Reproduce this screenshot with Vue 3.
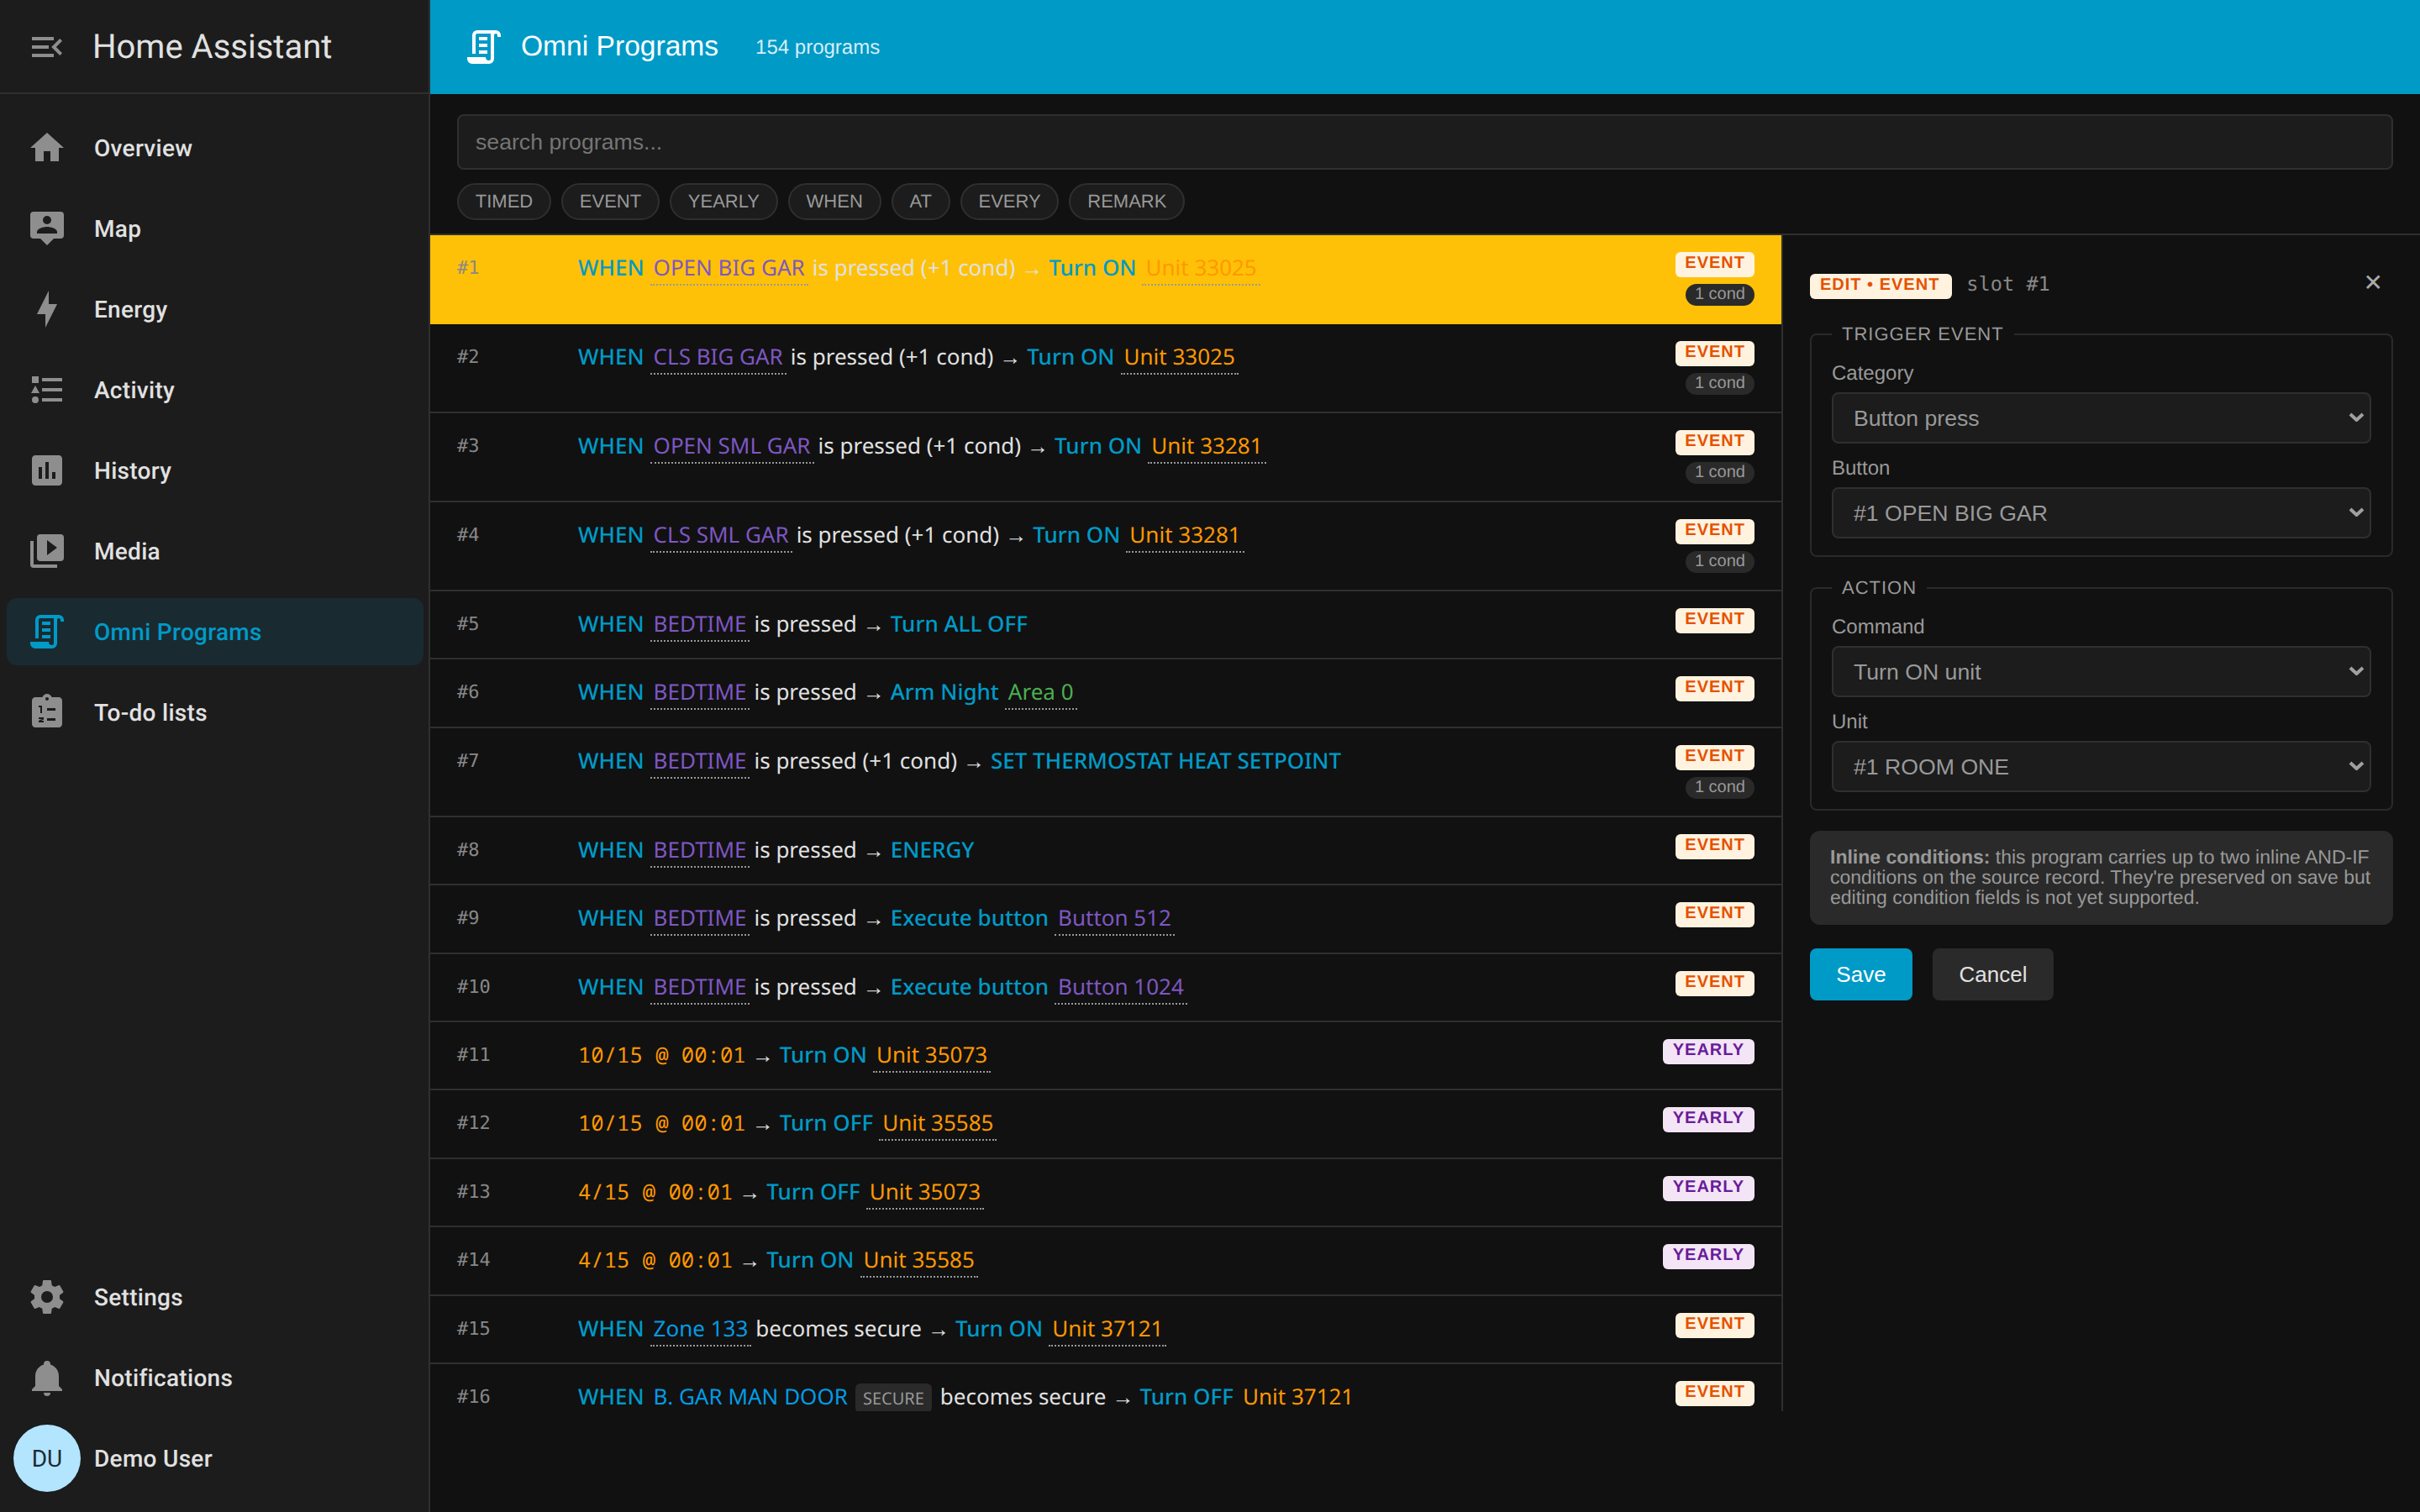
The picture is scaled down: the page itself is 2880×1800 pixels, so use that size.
<script setup>
const nav = [
  { label: 'Overview', d: 'M10,20V14H14V20H19V12H22L12,3L2,12H5V20H10Z' },
  { label: 'Map', d: 'M4 2H20A2 2 0 0 1 22 4V16A2 2 0 0 1 20 18H16L12 22L8 18H4A2 2 0 0 1 2 16V4A2 2 0 0 1 4 2M12 4.5A2.5 2.5 0 0 0 9.5 7A2.5 2.5 0 0 0 12 9.5A2.5 2.5 0 0 0 14.5 7A2.5 2.5 0 0 0 12 4.5M6 15H18V14C18 12 14 11 12 11S6 12 6 14V15Z' },
  { label: 'Energy', d: 'M11 15H6L13 1V9H18L11 23V15Z' },
  { label: 'Activity', d: 'M5,9.5L7.5,14H2.5L5,9.5M3,4H7V8H3V4M5,20A2,2 0 0,0 7,18A2,2 0 0,0 5,16A2,2 0 0,0 3,18A2,2 0 0,0 5,20M9,5V7H21V5H9M9,19H21V17H9V19M9,13H21V11H9V13Z' },
  { label: 'History', d: 'M9 17H7V10H9V17M13 17H11V7H13V17M17 17H15V13H17V17M19 3H5C3.9 3 3 3.9 3 5V19C3 20.1 3.9 21 5 21H19C20.1 21 21 20.1 21 19V5C21 3.9 20.1 3 19 3Z' },
  { label: 'Media', d: 'M4,6H2V20A2,2 0 0,0 4,22H18V20H4M20,2H8A2,2 0 0,0 6,4V16A2,2 0 0,0 8,18H20A2,2 0 0,0 22,16V4A2,2 0 0,0 20,2M12,14.5V5.5L18,10L12,14.5Z' },
  { label: 'Omni Programs', active: true, d: 'M15,20A1,1 0 0,0 16,19V4H8A1,1 0 0,0 7,5V16H5V5A3,3 0 0,1 8,2H19A3,3 0 0,1 22,5V6H20V5A1,1 0 0,0 19,4A1,1 0 0,0 18,5V9L18,19A3,3 0 0,1 15,22H5A3,3 0 0,1 2,19V18H13A2,2 0 0,0 15,20M9,6H14V8H9V6M9,10H14V12H9V10M9,14H14V16H9V14Z' },
  { label: 'To-do lists', d: 'M19 3H14.82C14.4 1.84 13.3 1 12 1S9.6 1.84 9.18 3H5C3.9 3 3 3.9 3 5V19C3 20.1 3.9 21 5 21H19C20.1 21 21 20.1 21 19V5C21 3.9 20.1 3 19 3M12 3C12.55 3 13 3.45 13 4S12.55 5 12 5 11 4.55 11 4 11.45 3 12 3M7 8H9V12.5H8V9H7ZM7 15H10V16.2L8.4 17H10V18H7V17L9 16H7ZM12 9.5H17V11H12ZM12 15.5H17V17H12Z' }
]
const bottomNav = [
  { label: 'Settings', d: 'M12,15.5A3.5,3.5 0 0,1 8.5,12A3.5,3.5 0 0,1 12,8.5A3.5,3.5 0 0,1 15.5,12A3.5,3.5 0 0,1 12,15.5M19.43,12.97C19.47,12.65 19.5,12.33 19.5,12C19.5,11.67 19.47,11.34 19.43,11L21.54,9.37C21.73,9.22 21.78,8.95 21.66,8.73L19.66,5.27C19.54,5.05 19.27,4.96 19.05,5.05L16.56,6.05C16.04,5.66 15.5,5.32 14.87,5.07L14.5,2.42C14.46,2.18 14.25,2 14,2H10C9.75,2 9.54,2.18 9.5,2.42L9.13,5.07C8.5,5.32 7.96,5.66 7.44,6.05L4.95,5.05C4.73,4.96 4.46,5.05 4.34,5.27L2.34,8.73C2.21,8.95 2.27,9.22 2.46,9.37L4.57,11C4.53,11.34 4.5,11.67 4.5,12C4.5,12.33 4.53,12.65 4.57,12.97L2.46,14.63C2.27,14.78 2.21,15.05 2.34,15.27L4.34,18.73C4.46,18.95 4.73,19.03 4.95,18.95L7.44,17.94C7.96,18.34 8.5,18.68 9.13,18.93L9.5,21.58C9.54,21.82 9.75,22 10,22H14C14.25,22 14.46,21.82 14.5,21.58L14.87,18.93C15.5,18.67 16.04,18.34 16.56,17.94L19.05,18.95C19.27,19.03 19.54,18.95 19.66,18.73L21.66,15.27C21.78,15.05 21.73,14.78 21.54,14.63L19.43,12.97Z' },
  { label: 'Notifications', d: 'M21,19V20H3V19L5,17V11C5,7.9 7.03,5.17 10,4.29C10,4.19 10,4.1 10,4A2,2 0 0,1 12,2A2,2 0 0,1 14,4C14,4.1 14,4.19 14,4.29C16.97,5.17 19,7.9 19,11V17L21,19M14,21A2,2 0 0,1 12,23A2,2 0 0,1 10,21' }
]
const scriptIcon = nav[6].d
const filters = ['TIMED', 'EVENT', 'YEARLY', 'WHEN', 'AT', 'EVERY', 'REMARK']

const kw = t => ({ c: 'kw', t })
const btn = t => ({ c: 'ref btn', t })
const unit = t => ({ c: 'ref unit', t })
const zone = t => ({ c: 'ref zone', t })
const area = t => ({ c: 'ref area', t })
const txt = t => ({ c: 'txt', t })
const arrow = { c: 'arrow', t: '→' }
const when = kw('WHEN')
const time = t => ({ c: 'time', t })
const pressed = b => [when, btn(b), txt('is pressed')]
const pressed1 = b => [when, btn(b), txt('is pressed (+1 cond)')]

const rows = [
  { n: 1, sel: true, kind: 'EVENT', cond: 1, s: [...pressed1('OPEN BIG GAR'), arrow, kw('Turn ON'), unit('Unit 33025')] },
  { n: 2, kind: 'EVENT', cond: 1, s: [...pressed1('CLS BIG GAR'), arrow, kw('Turn ON'), unit('Unit 33025')] },
  { n: 3, kind: 'EVENT', cond: 1, s: [...pressed1('OPEN SML GAR'), arrow, kw('Turn ON'), unit('Unit 33281')] },
  { n: 4, kind: 'EVENT', cond: 1, s: [...pressed1('CLS SML GAR'), arrow, kw('Turn ON'), unit('Unit 33281')] },
  { n: 5, kind: 'EVENT', s: [...pressed('BEDTIME'), arrow, kw('Turn ALL OFF')] },
  { n: 6, kind: 'EVENT', s: [...pressed('BEDTIME'), arrow, kw('Arm Night'), area('Area 0')] },
  { n: 7, kind: 'EVENT', cond: 1, s: [...pressed1('BEDTIME'), arrow, kw('SET THERMOSTAT HEAT SETPOINT')] },
  { n: 8, kind: 'EVENT', s: [...pressed('BEDTIME'), arrow, kw('ENERGY')] },
  { n: 9, kind: 'EVENT', s: [...pressed('BEDTIME'), arrow, kw('Execute button'), btn('Button 512')] },
  { n: 10, kind: 'EVENT', s: [...pressed('BEDTIME'), arrow, kw('Execute button'), btn('Button 1024')] },
  { n: 11, kind: 'YEARLY', s: [time('10/15 @ 00:01'), arrow, kw('Turn ON'), unit('Unit 35073')] },
  { n: 12, kind: 'YEARLY', s: [time('10/15 @ 00:01'), arrow, kw('Turn OFF'), unit('Unit 35585')] },
  { n: 13, kind: 'YEARLY', s: [time('4/15 @ 00:01'), arrow, kw('Turn OFF'), unit('Unit 35073')] },
  { n: 14, kind: 'YEARLY', s: [time('4/15 @ 00:01'), arrow, kw('Turn ON'), unit('Unit 35585')] },
  { n: 15, kind: 'EVENT', s: [when, zone('Zone 133'), txt('becomes secure'), arrow, kw('Turn ON'), unit('Unit 37121')] },
  { n: 16, kind: 'EVENT', s: [when, zone('B. GAR MAN DOOR'), { c: 'state', t: 'SECURE' }, txt('becomes secure'), arrow, kw('Turn OFF'), unit('Unit 37121')] }
]
const chevron = 'M2 2 L9.5 9 L17 2'
</script>

<template>
  <div class="app">
    <aside class="sidebar">
      <div class="side-head">
        <svg class="icon" viewBox="0 0 24 24"><path d="M21,15.61L19.59,17L14.58,12L19.59,7L21,8.39L17.44,12L21,15.61M3,6H16V8H3V6M3,13V11H13V13H3M3,18V16H16V18H3Z" /></svg>
        <span class="brand">Home Assistant</span>
      </div>
      <nav class="nav">
        <a v-for="item in nav" :key="item.label" class="nav-item" :class="{ active: item.active }">
          <svg class="icon" viewBox="0 0 24 24"><path fill-rule="evenodd" :d="item.d" /></svg>
          <span>{{ item.label }}</span>
        </a>
      </nav>
      <div class="nav bottom">
        <a v-for="item in bottomNav" :key="item.label" class="nav-item">
          <svg class="icon" viewBox="0 0 24 24"><path :d="item.d" /></svg>
          <span>{{ item.label }}</span>
        </a>
        <a class="nav-item user">
          <span class="avatar">DU</span>
          <span>Demo User</span>
        </a>
      </div>
    </aside>

    <main class="main">
      <header class="topbar">
        <svg class="top-icon" viewBox="0 0 24 24"><path :d="scriptIcon" /></svg>
        <h1 class="top-title">Omni Programs</h1>
        <span class="top-count">154 programs</span>
      </header>

      <div class="toolbar">
        <input class="search" type="text" placeholder="search programs..." />
        <div class="chips">
          <span v-for="f in filters" :key="f" class="chip">{{ f }}</span>
        </div>
      </div>

      <div class="split">
        <div class="list">
          <div v-for="r in rows" :key="r.n" class="row" :class="{ sel: r.sel }">
            <span class="num">#{{ r.n }}</span>
            <div class="summary">
              <span v-for="(p, i) in r.s" :key="i" :class="p.c">{{ p.t }}</span>
            </div>
            <div class="meta">
              <span class="badge" :class="r.kind.toLowerCase()">{{ r.kind }}</span>
              <span v-if="r.cond" class="cond">{{ r.cond }} cond</span>
            </div>
          </div>
        </div>

        <section class="panel">
          <div class="panel-head">
            <span class="badge event edit">EDIT • EVENT</span>
            <span class="slot">slot #1</span>
            <span class="close">✕</span>
          </div>

          <fieldset class="group">
            <legend>TRIGGER EVENT</legend>
            <label class="field">
              <span>Category</span>
              <span class="select-wrap">
                <select><option>Button press</option></select>
                <svg class="chev" viewBox="0 0 19 11"><path :d="chevron" /></svg>
              </span>
            </label>
            <label class="field">
              <span>Button</span>
              <span class="select-wrap">
                <select><option>#1 OPEN BIG GAR</option></select>
                <svg class="chev" viewBox="0 0 19 11"><path :d="chevron" /></svg>
              </span>
            </label>
          </fieldset>

          <fieldset class="group">
            <legend>ACTION</legend>
            <label class="field">
              <span>Command</span>
              <span class="select-wrap">
                <select><option>Turn ON unit</option></select>
                <svg class="chev" viewBox="0 0 19 11"><path :d="chevron" /></svg>
              </span>
            </label>
            <label class="field">
              <span>Unit</span>
              <span class="select-wrap">
                <select><option>#1 ROOM ONE</option></select>
                <svg class="chev" viewBox="0 0 19 11"><path :d="chevron" /></svg>
              </span>
            </label>
          </fieldset>

          <p class="info"><b>Inline conditions:</b> this program carries up to two inline AND-IF conditions on the source record. They're preserved on save but editing condition fields is not yet supported.</p>

          <div class="actions">
            <button class="save">Save</button>
            <button class="cancel">Cancel</button>
          </div>
        </section>
      </div>
    </main>
  </div>
</template>

<style>
html, body { margin: 0; background: #111111; }
</style>

<style scoped>
.app { display: flex; width: 2880px; height: 1800px; overflow: hidden; background: #111111; font-family: "Liberation Sans", Arial, sans-serif; text-rendering: geometricPrecision; }
.sidebar { width: 512px; flex: none; box-sizing: border-box; border-right: 2px solid #2f2f2f; background: #1c1c1c; display: flex; flex-direction: column; font-family: Roboto, sans-serif; }
.side-head { height: 112px; box-sizing: border-box; border-bottom: 2px solid #2f2f2f; display: flex; align-items: center; padding: 1px 0 0 32px; gap: 30px; flex: none; }
.brand { font-size: 40px; font-weight: 400; color: #e1e1e1; }
.icon { width: 48px; height: 48px; fill: #8e8e8e; flex: none; }
.nav { display: flex; flex-direction: column; gap: 16px; padding: 24px 6px 0 8px; }
.bottom { margin-top: auto; padding-top: 0; padding-bottom: 24px; }
.nav-item { height: 80px; display: flex; align-items: center; gap: 32px; padding-left: 24px; border-radius: 12px; font-size: 28px; font-weight: 500; letter-spacing: .3px; color: #e1e1e1; }
.nav-item.active { background: #1a2a31; color: #009ac7; }
.nav-item.active .icon { fill: #009ac7; }
.user { padding-left: 8px; gap: 16px; }
.avatar { width: 80px; height: 80px; border-radius: 50%; background: #b3e5ff; color: #1c2a33; font-size: 28px; font-weight: 400; letter-spacing: 0; display: flex; align-items: center; justify-content: center; flex: none; }

.main { flex: 1; min-width: 0; display: flex; flex-direction: column; }
.topbar { height: 112px; flex: none; background: #009ac7; color: #fff; display: flex; align-items: center; padding-left: 40px; }
.top-icon { width: 48px; height: 48px; fill: #fff; margin-right: 20px; flex: none; }
.top-title { margin: 0 44px 0 0; font-size: 33.6px; font-weight: 400; font-family: "Liberation Sans", Arial, sans-serif; }
.top-count { font-size: 24px; padding-top: 1px; color: rgba(255,255,255,.85); }

.toolbar { flex: none; box-sizing: border-box; height: 168px; border-bottom: 2px solid #2f2f2f; padding: 24px 32px 0; }
.search { display: block; box-sizing: border-box; width: 100%; height: 66px; padding: 0 20px; background: #1c1c1c; border: 2px solid #2f2f2f; border-radius: 8px; color: #e1e1e1; font: 26.67px "Liberation Sans", Arial, sans-serif; outline: none; }
.search::placeholder { color: #757575; opacity: 1; }
.chips { display: flex; gap: 12px; margin-top: 16px; }
.chip { height: 44px; box-sizing: border-box; padding: 0 19.8px; display: flex; align-items: center; background: #1c1c1c; border: 2px solid #2f2f2f; border-radius: 22px; color: #999; font-size: 22px; }

.split { display: flex; height: 1400px; flex: none; overflow: hidden; }
.list { flex: 1; min-width: 0; border-right: 2px solid #2f2f2f; overflow: hidden; }
.row { box-sizing: border-box; display: grid; grid-template-columns: 144px 1fr auto; padding: 20px 32px; border-bottom: 2px solid #2f2f2f; align-items: start; font-family: "Noto Sans", sans-serif; font-size: 26px; line-height: 39.4px; color: #e1e1e1; }
.row.sel { background: #ffc107; border-bottom-color: #ffc107; }
.num { font-family: "DejaVu Sans Mono", monospace; font-size: 22px; color: #888; }
.summary { white-space: nowrap; min-width: 0; height: 39.4px; line-height: 37.4px; }
.summary > span + span { margin-left: 7px; }
.summary > .ref + span { margin-left: 5px; }
.kw { color: #009ac7; font-weight: 500; }
.time { color: #ff9800; font-family: "Noto Sans Mono", "DejaVu Sans Mono", monospace; font-size: 25.6px; }
.ref { padding: 0 4px 2px; border-bottom: 2px dotted #999; }
.btn { color: #7e57c2; }
.unit { color: #ff9800; }
.zone { color: #039be5; }
.area { color: #4caf50; }
.state { font-size: 20px; padding: 4px 9px; background: #2a2a2a; color: #999; border-radius: 6px; }
.summary > .state + span { margin-left: 10px; }
.meta { display: flex; flex-direction: column; align-items: flex-end; gap: 8px; }
.badge { display: block; box-sizing: border-box; height: 30px; padding: 0 12px; border-radius: 6px; font: 700 20px/26px "Liberation Sans", Arial, sans-serif; letter-spacing: 1px; }
.badge.event { background: #fff3e0; color: #e65100; padding: 0 11px; }
.badge.event.edit { padding: 0 15px 0 12px; }
.badge.yearly { background: #f3e5f5; color: #6a1b9a; }
.cond { display: block; height: 26px; box-sizing: border-box; padding: 0 11px; border-radius: 13px; background: #2a2a2a; color: #999; font: 20px/25px "Liberation Sans", Arial, sans-serif; }

.panel { width: 758px; flex: none; box-sizing: border-box; padding: 32px 32px 0; color: #999; }
.panel-head { display: flex; align-items: flex-start; height: 73px; }
.edit { margin-top: 14px; }
.slot { font: 23.6px/28px "DejaVu Sans Mono", monospace; color: #888; margin: 12px 0 0 17px; }
.close { margin-left: auto; margin-right: 12px; font-size: 28px; line-height: 32px; margin-top: 9px; color: #aaa; }
.group { margin: 0 0 24px; padding: 20px 24px 20px; border: 2px solid #2a2a2a; border-radius: 8px; min-width: 0; }
.group legend { padding: 0 12px; font-size: 22px; letter-spacing: 1px; color: #999; }
.field { display: block; }
.field + .field { margin-top: 16px; }
.field > span:first-child { display: block; font-size: 24px; margin-bottom: 8px; color: #999; }
.select-wrap { position: relative; display: block; }
.select-wrap select { display: block; width: 100%; height: 61px; box-sizing: border-box; appearance: none; padding: 0 24px; background: #1c1c1c; border: 2px solid #2f2f2f; border-radius: 8px; color: #999; font: 26.67px "Liberation Sans", Arial, sans-serif; }
.chev { position: absolute; right: 8px; top: 24px; width: 19px; height: 11px; fill: none; stroke: #a0a0a0; stroke-width: 4; }
.info { margin: 0; padding: 19px 24px 21px; background: #2a2a2a; border-radius: 12px; font-size: 23px; line-height: 24px; color: #999; }
.actions { display: flex; gap: 24px; margin-top: 28px; }
.actions button { height: 62px; border: none; border-radius: 8px; font: 26px "Liberation Sans", Arial, sans-serif; padding-top: 1px; }
.save { width: 122px; background: #009ac7; color: #fff; }
.cancel { width: 144px; background: #2a2a2a; color: #e1e1e1; }
</style>
